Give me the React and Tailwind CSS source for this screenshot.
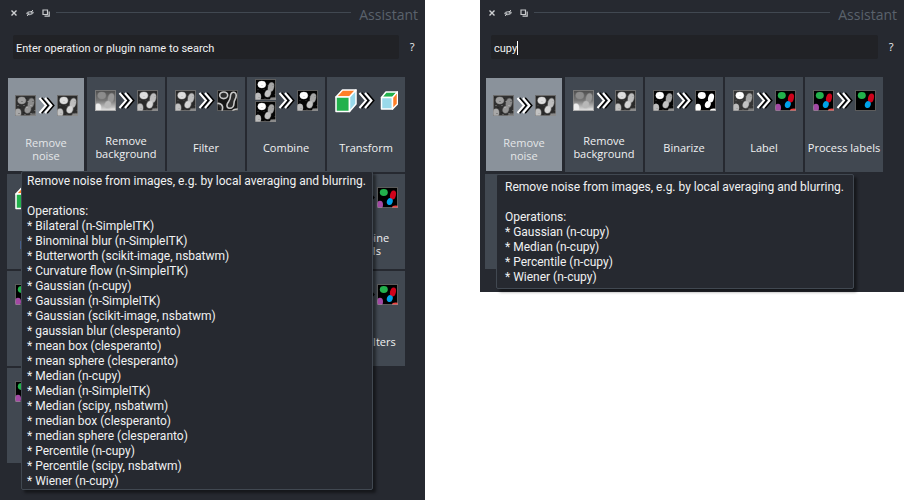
import React from "react";

const SHAPES = {
  head: { cx: 6.8, cy: 5.5, rx: 4, ry: 3.4 },
  upper: { cx: 16, cy: 8, rx: 2.9, ry: 4.6, transform: "rotate(14 16 8)" },
  lower: { cx: 12.8, cy: 14.6, rx: 2.9, ry: 3.5, transform: "rotate(20 12.8 14.6)" },
  left: { cx: 3, cy: 17.8, rx: 3, ry: 4 },
  corner: { cx: 18.6, cy: 20.6, rx: 3.6, ry: 2.2 },
};

const PALETTES = {
  noisy: { bg: "#303030", head: "#a0a0a0", upper: "#8c8c8c", lower: "#969696", left: "#a8a8a8", corner: "#707070", speckle: 0.22, glow: 1.2 },
  clean: { bg: "#2a2a2a", head: "#dedede", upper: "#bdbdbd", lower: "#d6d6d6", left: "#c2c2c2", corner: "#8a8a8a", speckle: 0.08, glow: 1.4 },
  haze: { bg: "url(#haze)", head: "#8c8c8c", upper: "#969696", lower: "#b8b8b8", left: "#eeeeee", corner: "#dddddd", speckle: 0, glow: 1.4 },
  bright: { bg: "#050505", head: "#ffffff", upper: "#a6a6a6", lower: "#c2c2c2", left: "#bcbcbc", corner: "#8a8a8a", speckle: 0.1, glow: 1 },
  soft: { bg: "#363636", head: "#ffffff", upper: "#a6a6a6", lower: "#c2c2c2", left: "#bcbcbc", corner: "#777777", speckle: 0.1, glow: 1 },
  binary: { bg: "#000000", head: "#ffffff", upper: "#ffffff", lower: "#ffffff", left: "#ffffff", corner: "#ffffff", speckle: 0, glow: 0 },
  labels: { bg: "#000000", head: "#22b14c", upper: "#d0021b", lower: "#00a2e8", left: "#a349a4", corner: "#f04040", speckle: 0, glow: 0 },
  inner: { bg: "#000000", head: "#22b14c", upper: "#d0021b", lower: "#00a2e8", speckle: 0, glow: 0 },
};

const SPECKLES = [
  [2, 10], [4, 12], [8, 10], [10, 3], [12, 6], [18, 2], [19, 15], [8, 17],
  [15, 18], [6, 6], [15, 10], [3, 18], [11, 12], [17, 6], [9, 19], [1, 2],
];

function Cells({ kind, x, y }) {
  if (kind === "edges") {
    return (
      <svg x={x} y={y} width="21" height="21" viewBox="0 0 21 21">
        <rect width="21" height="21" fill="#161616" />
        <g fill="#2c2c2c" stroke="#c8c8c8" strokeWidth="1.6">
          <ellipse cx="6.7" cy="5.3" rx="4" ry="3.3" />
          <path d="M13.400 6.500c0-3 1.600-4.500 3.600-4.200 2 .3 2.600 2.700 2 5-.6 2.300-2 3-2 6 0 3-2 5-4.200 5-2.400 0-3.400-2-2.600-4.200.8-2.200 3.200-3.600 3.200-7.600z" />
          <path d="M0 13.500c2.500-.5 5 .5 5.500 3 .3 1.500 0 3-.5 4.500M15.500 21c1-1.500 3-2 5.500-2" />
        </g>
        <rect x=".5" y=".5" width="20" height="20" fill="none" stroke="#888" strokeOpacity=".6" />
      </svg>
    );
  }
  const p = PALETTES[kind];
  return (
    <svg x={x} y={y} width="21" height="21" viewBox="0 0 21 21">
      <rect width="21" height="21" fill={p.bg} />
      {Object.keys(SHAPES).map(
        (k) => p[k] && <ellipse key={k} {...SHAPES[k]} fill={p[k]} stroke={p[k]} strokeWidth={p.glow} strokeOpacity=".4" />,
      )}
      {p.speckle > 0 &&
        SPECKLES.map(([sx, sy], i) => (
          <rect key={i} x={sx} y={sy} width="2" height="1" fill={i % 2 ? "#000" : "#fff"} opacity={p.speckle} />
        ))}
      <rect x=".5" y=".5" width="20" height="20" fill="none" stroke="#8c8c8c" strokeOpacity=".65" />
    </svg>
  );
}

function BigCube() {
  return (
    <g stroke="#fff" strokeWidth="1.5" strokeLinejoin="round">
      <path d="M1 8L7.500 1H21L14.500 8z" fill="#ff7f27" />
      <path d="M1 8H14.500V22.500H1z" fill="#22b14c" />
      <path d="M14.500 8L21 1V15L14.500 22.500z" fill="#99d9ea" />
    </g>
  );
}

function SmallCube() {
  return (
    <g stroke="#fff" strokeWidth="1.5" strokeLinejoin="round">
      <path d="M46.500 8.500L51 3H62.500L58 8.500z" fill="#22b14c" />
      <path d="M46.500 8.500H57.500V20H46.500z" fill="#99d9ea" />
      <path d="M57.500 8.500L62.500 3V15L57.500 20z" fill="#ff7f27" />
    </g>
  );
}

function Arrow() {
  return (
    <g fill="none" strokeWidth="2">
      <path d="M26.500 14l6.500 7.500-6.500 7.500M32 14l6.500 7.500-6.500 7.500" stroke="#000" />
      <path d="M24.500 14l6.500 7.500-6.500 7.500M30 14l6.500 7.500-6.500 7.500" stroke="#fff" />
    </g>
  );
}

function Picture({ from, to }) {
  return (
    <svg width="64" height="43" viewBox="-1 0 64 43" aria-hidden="true" className="shrink-0">
      <defs>
        <linearGradient id="haze" x1="0" y1="0" x2="0" y2="1">
          <stop offset="0" stopColor="#4c4c4c" />
          <stop offset=".5" stopColor="#777" />
          <stop offset="1" stopColor="#e8e8e8" />
        </linearGradient>
      </defs>
      {from === "cube" && <g transform="translate(0 10)"><BigCube /></g>}
      {from === "pair" && (
        <>
          <Cells kind="bright" x={0} y={0} />
          <Cells kind="bright" x={0} y={22} />
        </>
      )}
      {from && from !== "cube" && from !== "pair" && <Cells kind={from} x={0} y={11} />}
      <Arrow />
      {to === "cube" ? <g transform="translate(0 10)"><SmallCube /></g> : <Cells kind={to} x={42} y={11} />}
    </svg>
  );
}

function Tile({ label, from, to, wrap, selected }) {
  return (
    <li className="flex">
      <button
        type="button"
        className={
          selected
            ? "m-px flex h-[93px] w-[76px] flex-col items-center bg-[#8a929b] pt-1.5 text-[#e4e6e8]"
            : "flex h-[95px] w-[78px] flex-col items-center bg-[#414851] pt-0.5 text-[#f0f1f2]"
        }
      >
        <Picture from={from} to={to} />
        <span className={"flex items-center justify-center text-[11px] leading-[13px] " + (selected ? "h-11" : "h-[52px]")}>
          <span className={wrap ? "w-16" : "whitespace-nowrap"}>{label}</span>
        </span>
      </button>
    </li>
  );
}

function TitleBar() {
  return (
    <header className="flex h-[25px] items-center pr-[7px] pl-[3px]">
      <div className="flex gap-2">
        <button type="button" aria-label="Close" className="flex size-2">
          <svg viewBox="0 0 8 8" width="8" height="8"><path d="M1.500 1.500l5 5M6.500 1.500l-5 5" stroke="#d0d2d4" strokeWidth="1.4" /></svg>
        </button>
        <button type="button" aria-label="Hide" className="flex size-2">
          <svg viewBox="0 0 8 8" width="8" height="8">
            <path d="M0 4.500C2 1.500 6 1.500 8 3.500 6 7 2 7 0 4.500z" fill="#a0a3a7" />
            <path d="M1 7L7 1" stroke="#d0d2d4" strokeWidth=".9" />
            <circle cx="4" cy="4" r="1" fill="#4a4e55" />
          </svg>
        </button>
        <button type="button" aria-label="Float" className="flex size-2">
          <svg viewBox="0 0 8 8" width="8" height="8" fill="none" stroke="#c8cacc">
            <path d="M1 1h4.500v4.500H1z" strokeWidth="1.2" />
            <path d="M2.500 7.200H7.200V2.500" strokeWidth="1.2" />
          </svg>
        </button>
      </div>
      <div className="mr-2 ml-1.5 h-px flex-1 bg-[#414851]" />
      <h2 className="pt-1 text-[14px] leading-5 text-[#5a626c]">Assistant</h2>
    </header>
  );
}

function Search({ id, value }) {
  return (
    <div className="mt-2.5 flex items-center gap-2.5 pr-2.5 pl-1.5">
      <div className="relative flex flex-1 font-['Roboto','Liberation_Sans',sans-serif] text-[11px]">
        <input
          id={id}
          type="text"
          aria-label="Search operations"
          defaultValue={value}
          placeholder="Enter operation or plugin name to search"
          className="h-6 w-full min-w-0 rounded-xs bg-[#212226] px-[3px] pt-0.5 text-[#f0f1f2] placeholder:text-[#f0f1f2] placeholder:opacity-100"
        />
        {value && (
          <span className="pointer-events-none absolute top-1.5 left-[3px] flex h-3.5 border-r border-white leading-3.5" aria-hidden="true">
            <span className="invisible">{value}</span>
          </span>
        )}
      </div>
      <button type="button" aria-label="Help" className="w-1.5 text-[11px] leading-6 text-[#f0f1f2]">?</button>
    </div>
  );
}

function Tooltip({ operations, className }) {
  return (
    <div
      role="tooltip"
      className={"absolute rounded-xs border border-[#414851] bg-[#262930] font-['Roboto','Noto_Sans',sans-serif] text-[12px] leading-[15px] whitespace-nowrap text-[#f0f1f2] shadow-[3px_3px_3px_rgba(0,0,0,0.45)] " + className}
    >
      <p>Remove noise from images, e.g. by local averaging and blurring.</p>
      <p className="mt-[15px]">Operations:</p>
      <ul>
        {operations.map((op) => (
          <li key={op}>* {op}</li>
        ))}
      </ul>
    </div>
  );
}

function Assistant({ id, value, tiles, operations, className, tooltipClass }) {
  return (
    <section className={"min-w-0 bg-[#262930] " + className}>
      <TitleBar />
      <Search id={id} value={value} />
      <div className="relative mt-[18px]">
        <ul className="grid grid-cols-[repeat(5,78px)] gap-0.5">
          {tiles.map((t, i) => (
            <Tile key={t.label} {...t} selected={i === 0} />
          ))}
        </ul>
        <Tooltip operations={operations} className={tooltipClass} />
      </div>
    </section>
  );
}

const removeNoise = { label: "Remove noise", from: "noisy", to: "clean", wrap: true };
const removeBackground = { label: "Remove background", from: "haze", to: "clean", wrap: true };
const binarize = { label: "Binarize", from: "bright", to: "binary" };
const label = { label: "Label", from: "soft", to: "labels" };
const processLabels = { label: "Process labels", from: "labels", to: "inner" };

const ALL_TILES = [
  removeNoise,
  removeBackground,
  { label: "Filter", from: "clean", to: "edges" },
  { label: "Combine", from: "pair", to: "bright" },
  { label: "Transform", from: "cube", to: "cube" },
  { label: "Projection", from: "cube", to: "clean" },
  binarize,
  label,
  processLabels,
  { label: "Combine labels", from: "labels", to: "labels", wrap: true },
  { label: "Measure", from: "labels", to: "labels" },
  { label: "Map", from: "labels", to: "clean" },
  { label: "Mesh", from: "labels", to: "labels" },
  { label: "Compare", from: "labels", to: "labels" },
  { label: "Label filters", from: "labels", to: "labels" },
  { label: "Visualize", from: "labels", to: "labels" },
];

const CUPY_TILES = [
  removeNoise,
  removeBackground,
  binarize,
  label,
  processLabels,
  { label: "Measure", to: "labels" },
];

const ALL_OPERATIONS = [
  "Bilateral (n-SimpleITK)",
  "Binominal blur (n-SimpleITK)",
  "Butterworth (scikit-image, nsbatwm)",
  "Curvature flow (n-SimpleITK)",
  "Gaussian (n-cupy)",
  "Gaussian (n-SimpleITK)",
  "Gaussian (scikit-image, nsbatwm)",
  "gaussian blur (clesperanto)",
  "mean box (clesperanto)",
  "mean sphere (clesperanto)",
  "Median (n-cupy)",
  "Median (n-SimpleITK)",
  "Median (scipy, nsbatwm)",
  "median box (clesperanto)",
  "median sphere (clesperanto)",
  "Percentile (n-cupy)",
  "Percentile (scipy, nsbatwm)",
  "Wiener (n-cupy)",
];

const CUPY_OPERATIONS = ["Gaussian (n-cupy)", "Median (n-cupy)", "Percentile (n-cupy)", "Wiener (n-cupy)"];

export default function App() {
  return (
    <main className="flex min-h-screen items-start gap-[55px] bg-white pr-1 font-['Open_Sans','Noto_Sans',sans-serif]">
      <Assistant
        id="search-all"
        tiles={ALL_TILES}
        operations={ALL_OPERATIONS}
        className="min-h-screen flex-[418] pl-[7px]"
        tooltipClass="top-[94px] left-3.5 w-[352px] px-[5px] pt-0.5"
      />
      <Assistant
        id="search-cupy"
        value="cupy"
        tiles={CUPY_TILES}
        operations={CUPY_OPERATIONS}
        className="flex-[419] pb-[23px] pl-[5px]"
        tooltipClass="top-[97px] left-[11px] w-[358px] px-2 pt-[5px] pb-[3px]"
      />
    </main>
  );
}
